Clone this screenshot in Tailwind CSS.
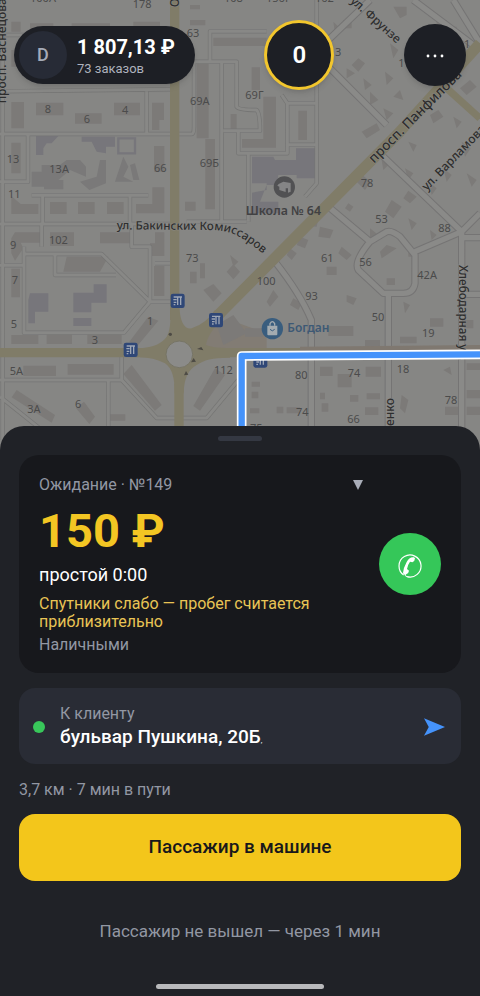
<!DOCTYPE html>
<html lang="ru">
<head>
<meta charset="utf-8">
<meta name="viewport" content="width=device-width, initial-scale=1">
<title>Заказ №149</title>
<script src="https://cdn.jsdelivr.net/npm/@tailwindcss/browser@4"></script>
</head>
<body class="bg-[#202227] font-[Roboto,sans-serif] text-white">
<main class="flex min-h-screen flex-col">
  <section class="relative min-h-[300px] flex-1 overflow-hidden bg-[#868684]" aria-label="Карта">
    <svg class="absolute inset-0 h-full w-full" viewBox="0 0 1440 1350" preserveAspectRatio="xMidYMin slice" font-family="Noto Sans, sans-serif">
      <defs>
        <g id="lanes" fill="none" stroke-linejoin="round">
          <path d="M0 274L510 268M0 672H510M0 545H84V402M0 402H575Q582 402 582 380V185M8 0V1320M440 272V400M390 590V668M128 590V668M95 586H445M125 672V740M0 796H72M395 672V740H450V905M450 905H510M72 740V998H372L450 905M72 762H305L450 905M165 765V825H348M465 790H510M0 1140H365L470 1254H620L715 1140M325 1140V1320M365 1070V1140M0 1190L150 1310M0 105H80M630 185V94H800M540 185H710V320Q715 330 770 330Q780 340 780 392H670M665 185V665M745 460V665M715 392V460H862V310H950M950 0V550L915 590M862 310L845 285M862 434H950M740 665H560"/>
        </g>
        <g id="streets" fill="none" stroke-linejoin="round">
          <path d="M985 620L1110 725L1160 695Q1175 690 1200 710L1245 765V850Q1240 880 1210 880H1150L1075 810Q1060 785 1110 725M1245 755L1385 695M1150 470L1385 695L1440 640M1385 695V1320M1385 713H1440M1385 883H1440M985 200L1160 375M985 120L1110 0M1240 0L1440 150M825 785Q900 880 934 960V1320M1165 880V1320M1360 0L1440 130"/>
        </g>
        <path id="komissarov" d="M350 688L640 690Q680 692 710 706Q750 726 830 795"/>
        <g id="stop">
          <rect width="42" height="43" rx="7" fill="#2f4777"/>
          <path d="M9 10H34M21 10V34M30 10V34M8 18H18M9 26H17M9 33H14" fill="none" stroke="#9fa7b5" stroke-width="4"/>
        </g>
      </defs>
      <rect width="1440" height="1350" fill="#868684"/>
      <path d="M560 1010L690 960L800 1000V1045H600Z" fill="#827c74"/>
      <g fill="#7c7a78">
        <path d="M34 306H72V385H34ZM108 308H190V346H108ZM225 340H305V371H225ZM342 308H420V346H342ZM456 308H492V360H478V390H456ZM34 428H62V520H34ZM462 438H493V515H462ZM590 190H626V415H590ZM616 417H645V628H616ZM640 113H800V138H640ZM755 202H780V270H755ZM790 290H828V443H726V417H790ZM895 332H921V420H895ZM692 342H710V388H692ZM555 605H587V632H555ZM34 588L62 612H115V642H34ZM150 606H200V642H150ZM234 606H284V642H234ZM321 606H371V642H321ZM457 562H493V640H408V612H457ZM45 697H123V728H62L70 745L45 782L34 760V715ZM150 697H222V738H150ZM300 697H390V730H300ZM465 697H493V768H450V730H465ZM34 806H60V892H34ZM462 798H493V888H462ZM200 770H325L300 815H190ZM34 1005H115V1032H34ZM140 1003H216V1032H140ZM262 1003H365V1032H262ZM70 1097H168V1128H70ZM203 1092H341V1124H203ZM50 1170L165 1245L155 1268L35 1192ZM252 1205L285 1250L268 1272L228 1225ZM330 1243H376V1262H330ZM395 1095L485 1215L465 1232L370 1122ZM645 1105L675 1125L600 1232L580 1218ZM445 950L475 962L410 1040L388 1025ZM34 150H95V200H34ZM34 65H62V95H34ZM90 70H160V90H90ZM215 70H330V90H215ZM400 65H480V82H400ZM570 60H616V76H570ZM570 15H600V28H570ZM650 975L700 945L740 1000L670 1035ZM735 985H790V1010H735ZM985 978H1060V1008H985ZM610 870L640 852L665 880L640 905Z"/>
        <path d="M570 815H590V850H570ZM600 790H615V835H600ZM680 815L700 793L720 815L700 838ZM690 765L715 785L700 800ZM925 660L955 655L950 680L920 678ZM960 680L1000 690L990 715L955 710ZM900 710L925 720L915 745L890 735ZM870 745L890 760L875 780L860 765ZM1025 740L1055 765L1040 780L1015 760ZM980 800H1010V825H980ZM1040 885L1070 895L1060 915L1040 905ZM880 895L905 910L895 930L870 915ZM820 870L835 890L810 920L800 905ZM1080 520L1112 545L1095 570L1070 545ZM1145 480L1165 495L1150 510ZM1175 600L1205 620L1180 655L1155 635ZM1045 610L1060 620L1050 635L1035 625ZM1110 685L1135 705L1110 715ZM1225 572L1250 590L1230 610L1210 595ZM1285 545L1310 565L1295 585ZM1225 655L1250 670L1235 690ZM1290 690L1310 705L1295 720ZM1160 735L1190 745L1145 775L1140 755ZM1160 835H1185V855H1160ZM1225 745H1245V770H1225ZM1085 395L1130 370L1140 390L1100 415ZM1215 505L1240 520L1225 540ZM1330 505L1355 525L1340 545ZM1385 425L1412 445L1395 470ZM1400 520L1430 540L1415 560Z"/>
        <path d="M1075 175L1095 190L1075 215L1055 195ZM1030 60H1055V85H1030ZM1040 205L1065 220L1040 235ZM1090 235L1115 255L1095 270ZM1110 275L1135 300L1110 315ZM1155 215L1180 235L1160 255ZM1170 130L1195 150L1180 175ZM1180 290L1200 270L1210 300ZM1150 325L1180 340L1160 360ZM1000 65L1020 85L1005 100ZM1180 20H1220V45L1200 55ZM1250 90L1275 105L1260 125ZM1310 60H1340V85H1310ZM1335 80H1370V105H1335ZM1380 265L1410 240L1430 260L1400 285ZM1360 350L1385 365L1370 385ZM1290 345L1315 330L1330 350L1300 370ZM1225 425L1250 435L1240 455ZM1290 955H1330V980H1290ZM1210 905L1230 915L1215 940ZM1375 960H1420V985H1375ZM960 1100H998V1128H960ZM1097 1100H1143V1130H1097ZM1013 1122H1055V1162H1013ZM755 1145H780V1160H755ZM755 1175H775V1195H755ZM750 1225H778V1240H750ZM830 1220H850V1240H830ZM860 1222H900V1240H860ZM960 1178H975V1198H960ZM965 1210H985V1235H965ZM1050 1185H1075V1205H1050ZM1100 1180H1140V1198H1100ZM1095 1222H1135V1245H1095ZM1205 1185L1225 1200L1215 1240L1200 1225ZM1335 1220H1375V1245H1335ZM1330 1110L1350 1100L1355 1125ZM1400 1090H1440V1110H1400ZM1400 1170H1440V1195H1400ZM1400 1220H1440V1245H1400ZM1095 1020H1140V1040H1095ZM1200 1010H1250V1030H1200Z"/>
      </g>
      <g fill="#77767b">
        <path d="M756 470H820L825 480H888V445H948V535H890V525H835L830 555H800L780 605H835V640H756V578L800 570V550H756ZM220 878H281V853H320V908H274V937H220ZM220 954H274V978H220ZM108 408H175L155 430H140L130 445V465H108ZM245 410H345V440H318V460L290 455L275 425H245ZM90 880H145V935H105V970H85V900Z"/>
        <path d="M95 515H125V495H180L200 480H240L258 500V530L210 510L175 540H190V568H132V560H95ZM300 480H318V550L268 570L240 545L290 530ZM345 545L370 470L385 500L370 530L400 545ZM390 495L405 490L418 540H400Z" fill="#7a7979"/>
        <path d="M355 415H405V460H355Z" fill="none" stroke="#77767b" stroke-width="7"/>
      </g>
      <use href="#lanes" stroke="#757574" stroke-width="13"/>
      <use href="#lanes" stroke="#888886" stroke-width="9"/>
      <use href="#streets" stroke="#757474" stroke-width="22"/>
      <use href="#streets" stroke="#8a8a88" stroke-width="16"/>
      <g fill="none" stroke="#807c68">
        <path d="M524 0V960" stroke-width="28"/>
        <path d="M0 1058H450M620 1058H900M537 1150V1350" stroke-width="28"/>
        <path d="M900 1050L1440 1045" stroke-width="20" stroke="#7f7870"/>
        <path d="M650 950L1195 400L1440 130" stroke-width="33"/>
        <path d="M1340 265L1440 355" stroke-width="22"/>
      </g>
      <path d="M510 920H538Q542 990 575 985Q620 970 645 930L675 945Q620 1005 618 1035Q640 1045 690 1044V1073Q620 1072 590 1095Q552 1115 551 1180H524Q525 1110 495 1090Q460 1072 420 1072V1045Q480 1040 500 1010Q515 985 510 920Z" fill="#807c68"/>
      <circle cx="538" cy="1063" r="40" fill="#8b8b89" stroke="#777566" stroke-width="3"/>
      <g fill="#4d4b45"><circle cx="511" cy="1003" r="5"/><path d="M591 1047L604 1041L610 1051ZM573 1087L581 1074L588 1085ZM552 1126L558 1113L565 1124Z"/></g>
      <g fill="#4b4b4b" font-size="33">
        <text x="90" y="7">100А</text><text x="398" y="24">178</text><text x="672" y="7">108</text><text x="798" y="7">156Г</text><text x="945" y="7">162</text>
        <text x="560" y="112">63</text><text x="1005" y="168">3</text><text x="1195" y="200">1</text><text x="1392" y="144">1</text>
        <text x="134" y="340">8</text><text x="251" y="368">6</text><text x="366" y="343">4</text><text x="570" y="315">69А</text><text x="736" y="298">69Г</text>
        <text x="20" y="490">13</text><text x="148" y="520">13А</text><text x="462" y="516">66</text><text x="599" y="501">69Б</text><text x="24" y="593">11</text>
        <text x="30" y="746">9</text><text x="147" y="733">102</text><text x="558" y="786">73</text><text x="35" y="851">7</text><text x="32" y="985">5</text>
        <text x="441" y="976">1</text><text x="275" y="1031">3</text><text x="29" y="1124">5А</text><text x="642" y="1122">112</text><text x="82" y="1240">3А</text><text x="225" y="1225">6</text>
        <text x="1082" y="560">78</text><text x="1126" y="670">53</text><text x="1315" y="696">88</text><text x="963" y="785">61</text><text x="1078" y="798">56</text>
        <text x="1252" y="837">42А</text><text x="770" y="855">100</text><text x="916" y="901">93</text><text x="1115" y="963">50</text><text x="1266" y="1011">19</text>
        <text x="885" y="1138">80</text><text x="1043" y="1131">74</text><text x="1190" y="1118">18</text><text x="888" y="1247">74</text><text x="1042" y="1269">66</text><text x="1334" y="1211">78</text><text x="750" y="1295">75</text>
      </g>
      <g fill="#2e2e2e" font-size="36" font-weight="500" stroke="#8b8b89" stroke-width="3" paint-order="stroke">
        <text font-size="35"><textPath href="#komissarov">ул. Бакинских Комиссаров</textPath></text>
        <text transform="translate(19 310) rotate(-90)">просп. Васнецова</text>
        <text transform="translate(536 22) rotate(-90)">Октябрьская</text>
        <text transform="translate(1049 5) rotate(42)">ул. Фрунзе</text>
        <text transform="translate(1122 491) rotate(-45)" font-size="41">просп. Панфилова</text>
        <text transform="translate(1280 574) rotate(-46)">ул. Варламова</text>
        <text transform="translate(1376 795) rotate(90)" font-size="35">Хлебодарная ул.</text>
        <text transform="translate(1181 1378) rotate(-90)">Шевченко</text>
      </g>
      <text x="737" y="646" font-size="37" font-weight="600" fill="#414143">Школа № 64</text>
      <circle cx="853" cy="561" r="32" fill="#515153"/>
      <path d="M836 552L850 545L872 549V575L864 578V565H857V576L838 570V560L832 557Z" fill="#858586"/>
      <circle cx="817" cy="986" r="32" fill="#395d7e"/>
      <path d="M802 977H832V1003Q832 1006 829 1006H805Q802 1006 802 1003Z" fill="#a3abb0"/>
      <path d="M810 977V971Q817 959 824 971V977" fill="none" stroke="#a3abb0" stroke-width="4"/>
      <path d="M810 988Q817 997 824 988" fill="none" stroke="#395d7e" stroke-width="3"/>
      <text x="862" y="997" font-size="36" font-weight="600" fill="#3d5975">Богдан</text>
      <use href="#stop" x="512" y="881"/><use href="#stop" x="627" y="939"/><use href="#stop" x="371" y="1028"/><use href="#stop" x="760" y="1060"/>
      <g fill="none" stroke-linejoin="round">
        <path d="M725 1350V1068L1440 1063" stroke="#fff" stroke-width="29"/>
        <path d="M725 1350V1068L1440 1063" stroke="#4593fb" stroke-width="19"/>
      </g>
    </svg>

    <header class="relative flex items-center justify-between px-[14px] pt-5">
      <a href="#" class="flex h-[58px] items-center gap-[10px] rounded-full bg-[#1d1f25] pr-5 pl-[5px] shadow-md">
        <span class="flex size-12 items-center justify-center rounded-full bg-[#272b36] text-lg font-medium text-[#a5abb8]">D</span>
        <span class="flex flex-col pt-1">
          <span class="text-xl leading-6 font-bold">1 807,13 ₽</span>
          <span class="text-[13px] leading-5 text-[#aeb2bd]">73 заказов</span>
        </span>
      </a>
      <button type="button" class="size-[70px] rounded-full border-3 border-[#f2c62d] bg-[#1d1f25] text-2xl font-semibold shadow-md">0</button>
      <button type="button" aria-label="Меню" class="flex size-[62px] items-center justify-center rounded-full bg-[#1d1f25] shadow-md">
        <svg class="w-5" viewBox="0 0 20 6" fill="#fff"><circle cx="3" cy="4" r="1.4"/><circle cx="10" cy="4" r="1.4"/><circle cx="17" cy="4" r="1.4"/></svg>
      </button>
    </header>
  </section>

  <section class="relative -mt-6 flex flex-col rounded-t-3xl bg-[#202227] px-[19px] pt-[10px] pb-[7px]">
    <div class="h-[5px] w-11 self-center rounded-full bg-[#343842]"></div>

    <article class="mt-[14px] flex items-center gap-4 rounded-[20px] bg-[#17181c] px-5 py-[18px]">
      <div class="min-w-0 flex-1">
        <div class="flex items-center justify-between text-base leading-6 text-[#9297a3]">
          <h2>Ожидание · №149</h2>
          <svg class="h-[10px] w-[10px]" viewBox="0 0 10 10" fill="#a9adb8" aria-hidden="true"><path d="M0 0H10L5 10Z"/></svg>
        </div>
        <p class="mt-[2px] text-[47px] leading-16 font-bold text-[#f3c623]">150 ₽</p>
        <p class="text-lg leading-6">простой 0:00</p>
        <p class="mt-2 text-base leading-[18px] text-[#e9c455]">Спутники слабо — пробег считается приблизительно</p>
        <p class="mt-1 text-base leading-5 text-[#9297a3]">Наличными</p>
      </div>
      <button type="button" aria-label="Позвонить" class="flex size-[62px] items-center justify-center rounded-full bg-[#35c759] pt-1">
        <svg class="size-6" viewBox="0 0 72 72" aria-hidden="true">
          <path d="M17 63A33 33 0 1 1 27 67.800" fill="none" stroke="#fff" stroke-width="3.500"/>
          <path d="M48 10Q34 8 26 24Q16 42 15 57Q17 64 25 61Q32 58 33 50L27 45Q28 34 36 23L43 25Q51 21 51 13Z" fill="#fff"/>
          <path d="M22 60Q19 66 27 68" stroke="#fff" stroke-width="3" fill="none"/>
        </svg>
      </button>
    </article>

    <a href="#" class="mt-[15px] flex items-center rounded-2xl bg-[#292c35] pt-4 pr-4 pb-[14px] pl-[14px]">
      <span class="size-3 shrink-0 rounded-full bg-[#38c75a]"></span>
      <span class="ml-[15px] flex min-w-0 flex-1 flex-col">
        <span class="text-base leading-5 text-[#9297a3]">К клиенту</span>
        <span class="text-[19px] leading-[26px] font-medium">бульвар Пушкина, 20Б<span class="text-[8px] leading-none font-normal">,</span></span>
      </span>
      <svg class="h-[18px] w-[21px]" viewBox="0 0 62 52" fill="#4593fb" aria-hidden="true"><path d="M0 0L62 26L0 52L14 26Z"/></svg>
    </a>

    <p class="mt-4 text-base leading-5 text-[#9297a3]">3,7 км · 7 мин в пути</p>
    <button type="button" class="mt-[14px] h-[67px] rounded-2xl bg-[#f3c61b] text-[19px] font-medium text-[#18181b]">Пассажир в машине</button>
    <button type="button" class="mt-[19px] h-16 text-[17px] text-[#9297a3]">Пассажир не вышел — через 1 мин</button>
    <div class="mt-5 h-[5px] w-[168px] self-center rounded-full bg-[#b8b9bb]"></div>
  </section>
</main>
</body>
</html>
